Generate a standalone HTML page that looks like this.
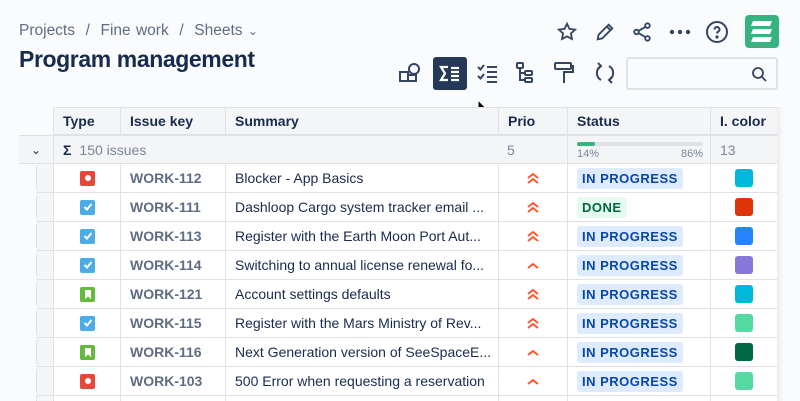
<!DOCTYPE html><html style="width:800px;height:401px;overflow:hidden"><head><style>
*{box-sizing:border-box;margin:0;padding:0}
body{width:800px;height:401px;overflow:hidden;background:#fafbfc;font-family:"Liberation Sans",sans-serif;color:#172b4d;position:relative}
.a{position:absolute}
.crumb{left:19px;top:22px;font-size:15.5px;color:#5e6c84;word-spacing:1px}
h1{position:absolute;left:19px;top:46px;font-size:23px;font-weight:bold;color:#172b4d;letter-spacing:-0.4px}
.ic{position:absolute;color:#344563}
.tbl{position:absolute;left:19px;top:107px;width:758px}
.row{position:absolute;left:0;height:29px;width:758px;border-bottom:1px solid #dfe1e6;font-size:14px}
.c{position:absolute;top:0;height:100%;border-left:1px solid #dfe1e6;display:flex;align-items:center;padding-left:9px;white-space:nowrap;overflow:hidden}
.h{font-weight:bold;color:#172b4d}
.key{color:#5e6c84;font-weight:bold}
.lz{display:inline-block;padding:3px 5px;border-radius:3px;font-size:13px;font-weight:bold;letter-spacing:0.5px}
.ip{background:#deebff;color:#0747a6}
.dn{background:#e3fcef;color:#006644}
.sq{width:18px;height:18px;border-radius:3px}
.ty{width:15px;height:15px;border-radius:2px;margin-left:26px;display:flex;align-items:center;justify-content:center}
</style></head><body>
<div class="a crumb">Projects &nbsp;/ &nbsp;Fine work &nbsp;/ &nbsp;Sheets <span style="font-size:12px">⌄</span></div>
<h1>Program management</h1>
<svg class="ic" style="left:556px;top:21px" width="22" height="22" viewBox="0 0 24 24" fill="none" stroke="#344563" stroke-width="2"><path d="M12 3l2.7 5.6 6.1.8-4.5 4.2 1.1 6L12 16.8 6.6 19.6l1.1-6L3.2 9.4l6.1-.8z"/></svg>
<svg class="ic" style="left:594px;top:21px" width="22" height="22" viewBox="0 0 24 24" fill="none" stroke="#344563" stroke-width="2"><path d="M4 20l1-5L16 4l4 4L9 19z M14 6l4 4"/></svg>
<svg class="ic" style="left:631px;top:20px" width="22" height="24" viewBox="0 0 24 24" fill="none" stroke="#344563" stroke-width="2"><circle cx="18" cy="5" r="2.5"/><circle cx="6" cy="12" r="2.5"/><circle cx="18" cy="19" r="2.5"/><path d="M8.2 10.8l7.6-4.5M8.2 13.2l7.6 4.5"/></svg>
<svg class="ic" style="left:669px;top:29px" width="22" height="6" viewBox="0 0 22 6" fill="#344563"><circle cx="3" cy="3" r="2.2"/><circle cx="11" cy="3" r="2.2"/><circle cx="19" cy="3" r="2.2"/></svg>
<svg class="ic" style="left:705px;top:20px" width="24" height="24" viewBox="0 0 24 24" fill="none" stroke="#344563" stroke-width="2"><circle cx="12" cy="12" r="10"/><path d="M9.5 9.5a2.5 2.5 0 1 1 3.5 2.3c-.7.4-1 .9-1 1.7"/><circle cx="12" cy="17" r=".6" fill="#344563"/></svg>
<div class="a" style="left:745px;top:15px;width:34px;height:33px;background:#36b37e;border-radius:4px"><svg width="34" height="33" viewBox="0 0 34 33"><g fill="#fff"><path d="M8 6h19l-2 5H6z"/><path d="M8 14h19l-2 5H6z"/><path d="M8 22h19l-2 5H6z"/></g></svg></div>
<svg class="ic" style="left:398px;top:61px" width="24" height="24" viewBox="0 0 24 24" fill="none" stroke="#344563" stroke-width="2"><rect x="2" y="11" width="8" height="9"/><rect x="10" y="14" width="8" height="6"/><circle cx="16" cy="8" r="5"/></svg>
<div class="a" style="left:433px;top:57px;width:34px;height:33px;background:#253858;border-radius:3px"><svg width="34" height="33" viewBox="0 0 34 33" fill="none" stroke="#fff" stroke-width="2.2"><path d="M15 10H8l4 6.5L8 23h7"/><path d="M18 11h8M18 15h8M18 19h8M18 23h8"/></svg></div>
<svg class="ic" style="left:476px;top:62px" width="24" height="22" viewBox="0 0 24 22" fill="none" stroke="#344563" stroke-width="2"><path d="M2 5l2.5 2.5L8 3M2 14l2.5 2.5L8 12M11 5h10M11 10h10M11 15h10M11 20h10"/></svg>
<svg class="ic" style="left:514px;top:61px" width="22" height="24" viewBox="0 0 22 24" fill="none" stroke="#344563" stroke-width="2"><rect x="3" y="2" width="6" height="5" rx="1"/><rect x="11" y="10" width="7" height="4" rx="1"/><rect x="11" y="17" width="7" height="4" rx="1"/><path d="M6 7v12h5M6 12h5"/></svg>
<svg class="ic" style="left:553px;top:61px" width="22" height="24" viewBox="0 0 22 24" fill="none" stroke="#344563" stroke-width="2"><rect x="2" y="2" width="16" height="6" rx="1"/><path d="M18 5h2v6h-9v3M11 14v8"/></svg>
<svg class="ic" style="left:593px;top:61px" width="24" height="24" viewBox="0 0 24 24" fill="none" stroke="#344563" stroke-width="2"><path d="M8 5a8 8 0 0 0 0 14M16 19a8 8 0 0 0 0-14M5 8l3-3-3-3M19 16l-3 3 3 3"/></svg>
<div class="a" style="left:626px;top:57px;width:152px;height:33px;border:2px solid #dfe1e6;border-radius:3px;background:#fafbfc"><svg style="position:absolute;right:9px;top:7px" width="16" height="16" viewBox="0 0 16 16" fill="none" stroke="#344563" stroke-width="1.8"><circle cx="7" cy="7" r="5"/><path d="M11 11l4 4"/></svg></div>
<svg class="a" style="left:477px;top:99px" width="14" height="18" viewBox="0 0 14 18"><path d="M1 1v13l3-3 2.5 5 2-1-2.5-5h4z" fill="#000" stroke="#fff" stroke-width="1"/></svg>
<div class="tbl">
<div class="row" style="top:0;left:34px;width:724px;height:28px;border-top:1px solid #dfe1e6;background:#f4f5f7;border-radius:4px 0 0 0">
<div class="c h" style="left:0;width:67px">Type</div><div class="c h" style="left:67px;width:105px">Issue key</div><div class="c h" style="left:172px;width:273px">Summary</div><div class="c h" style="left:445px;width:69px">Prio</div><div class="c h" style="left:514px;width:143px">Status</div><div class="c h" style="left:657px;width:67px">I. color</div></div>
<div class="row" style="top:28px;height:29px;background:#f4f5f7;border-top:1px solid #dfe1e6;color:#7a869a">
<div class="c" style="left:0;width:34px;border-left:none;color:#172b4d;font-size:12px;padding-left:12px">⌄</div>
<div class="c" style="left:34px;width:445px"><b style="color:#172b4d;margin-right:8px">Σ</b>150 issues</div>
<div class="c" style="left:479px;width:69px;border-left:none">5</div>
<div class="c" style="left:548px;width:143px;display:block;padding-top:6px;font-size:11px"><div style="width:126px;height:4px;background:#dfe1e6;border-radius:2px"><div style="width:18px;height:4px;background:#36b37e;border-radius:2px"></div></div><div style="display:flex;justify-content:space-between;width:126px;margin-top:2px"><span>14%</span><span>86%</span></div></div>
<div class="c" style="left:691px;width:67px">13</div></div>
</div>
<div id="rows"></div>
<div class="a" style="left:777px;top:107px;width:6px;height:294px;background:linear-gradient(90deg,rgba(0,0,0,.06),rgba(0,0,0,0))"></div>
<script>
var d=[["b","WORK-112","Blocker - App Basics",2,"IN PROGRESS","#00b8d9"],["t","WORK-111","Dashloop Cargo system tracker email ...",2,"DONE","#de350b"],["t","WORK-113","Register with the Earth Moon Port Aut...",2,"IN PROGRESS","#2684ff"],["t","WORK-114","Switching to annual license renewal fo...",1,"IN PROGRESS","#8777d9"],["s","WORK-121","Account settings defaults",2,"IN PROGRESS","#00b8d9"],["t","WORK-115","Register with the Mars Ministry of Rev...",2,"IN PROGRESS","#57d9a3"],["s","WORK-116","Next Generation version of SeeSpaceE...",1,"IN PROGRESS","#006644"],["b","WORK-103","500 Error when requesting a reservation",1,"IN PROGRESS","#57d9a3"]];
var h="";d.forEach(function(r,i){var top=164+i*29;
var ty=r[0]=="b"?'<div class="ty" style="background:#e5493a"><div style="width:6px;height:6px;border-radius:50%;background:#fff"></div></div>':r[0]=="t"?'<div class="ty" style="background:#4bade8"><svg width="10" height="10" viewBox="0 0 10 10" fill="none" stroke="#fff" stroke-width="2"><path d="M1.5 5l2.5 2.5L8.5 2"/></svg></div>':'<div class="ty" style="background:#63ba3c"><svg width="8" height="9" viewBox="0 0 8 9"><path d="M1 0h6v9L4 6.5 1 9z" fill="#fff"/></svg></div>';
var pr=r[3]==2?'<svg width="14" height="12" viewBox="0 0 14 12" fill="none" stroke="#ff5630" stroke-width="2"><path d="M2 6l5-4 5 4M2 11l5-4 5 4"/></svg>':'<svg width="14" height="8" viewBox="0 0 14 8" fill="none" stroke="#ff5630" stroke-width="2"><path d="M2 7l5-4 5 4"/></svg>';
h+='<div class="row" style="top:'+top+'px;left:36px;width:741px;background:#fff"><div class="c" style="left:0;width:17px;border-radius:4px 0 0 4px;background:#f4f5f7"></div><div class="c" style="left:17px;width:67px;padding:0">'+ty+'</div><div class="c key" style="left:84px;width:105px">'+r[1]+'</div><div class="c" style="left:189px;width:273px">'+r[2]+'</div><div class="c" style="left:462px;width:69px;justify-content:center;padding:0">'+pr+'</div><div class="c" style="left:531px;width:143px"><span class="lz '+(r[4]=="DONE"?"dn":"ip")+'">'+r[4]+'</span></div><div class="c" style="left:674px;width:67px;justify-content:center;padding:0"><div class="sq" style="background:'+r[5]+'"></div></div></div>';});
h+='<div class="row" style="top:396px;left:36px;width:741px;height:10px;background:#fff;border-bottom:0"><div class="c" style="left:0;width:17px;background:#f4f5f7"></div><div class="c" style="left:17px;width:67px"></div><div class="c" style="left:84px;width:105px"></div><div class="c" style="left:189px;width:273px"></div><div class="c" style="left:462px;width:69px"></div><div class="c" style="left:531px;width:143px"></div><div class="c" style="left:674px;width:67px"></div></div>';
document.getElementById("rows").innerHTML=h;
</script>
</body></html>
